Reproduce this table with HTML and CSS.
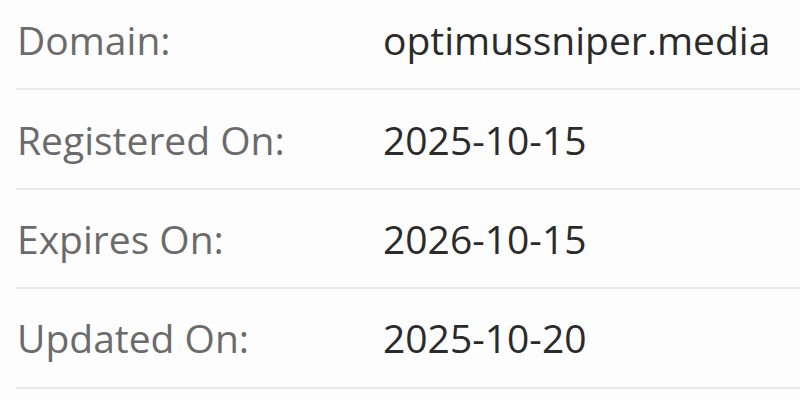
FILE: index.html
```html
<!DOCTYPE html>
<html lang="en">
<head>
<meta charset="utf-8">
<link rel="stylesheet" href="styles.css">
</head>
<body>
<div class="details">
  <div class="row"><div class="label">Domain:</div><div class="value">optimussniper.media</div></div>
  <div class="row"><div class="label">Registered On:</div><div class="value">2025-10-15</div></div>
  <div class="row"><div class="label">Expires On:</div><div class="value">2026-10-15</div></div>
  <div class="row"><div class="label">Updated On:</div><div class="value">2025-10-20</div></div>
</div>
</body>
</html>
```
FILE: styles.css
```css
html, body {
  margin: 0;
  padding: 0;
  background: #fdfdfd;
}
body {
  font-family: "Open Sans", "Noto Sans", sans-serif;
  font-size: 39px;
}
.details {
  margin-top: -9px;
  padding-left: 16px;
}
.row {
  display: grid;
  grid-template-columns: 367px 1fr;
  align-items: center;
  height: 97.4px;
  border-bottom: 2px solid #e9e9e9;
}
.label {
  color: #6b6b6b;
  padding-left: 1px;
}
.value {
  color: #2b2b2b;
  white-space: nowrap;
}
```
